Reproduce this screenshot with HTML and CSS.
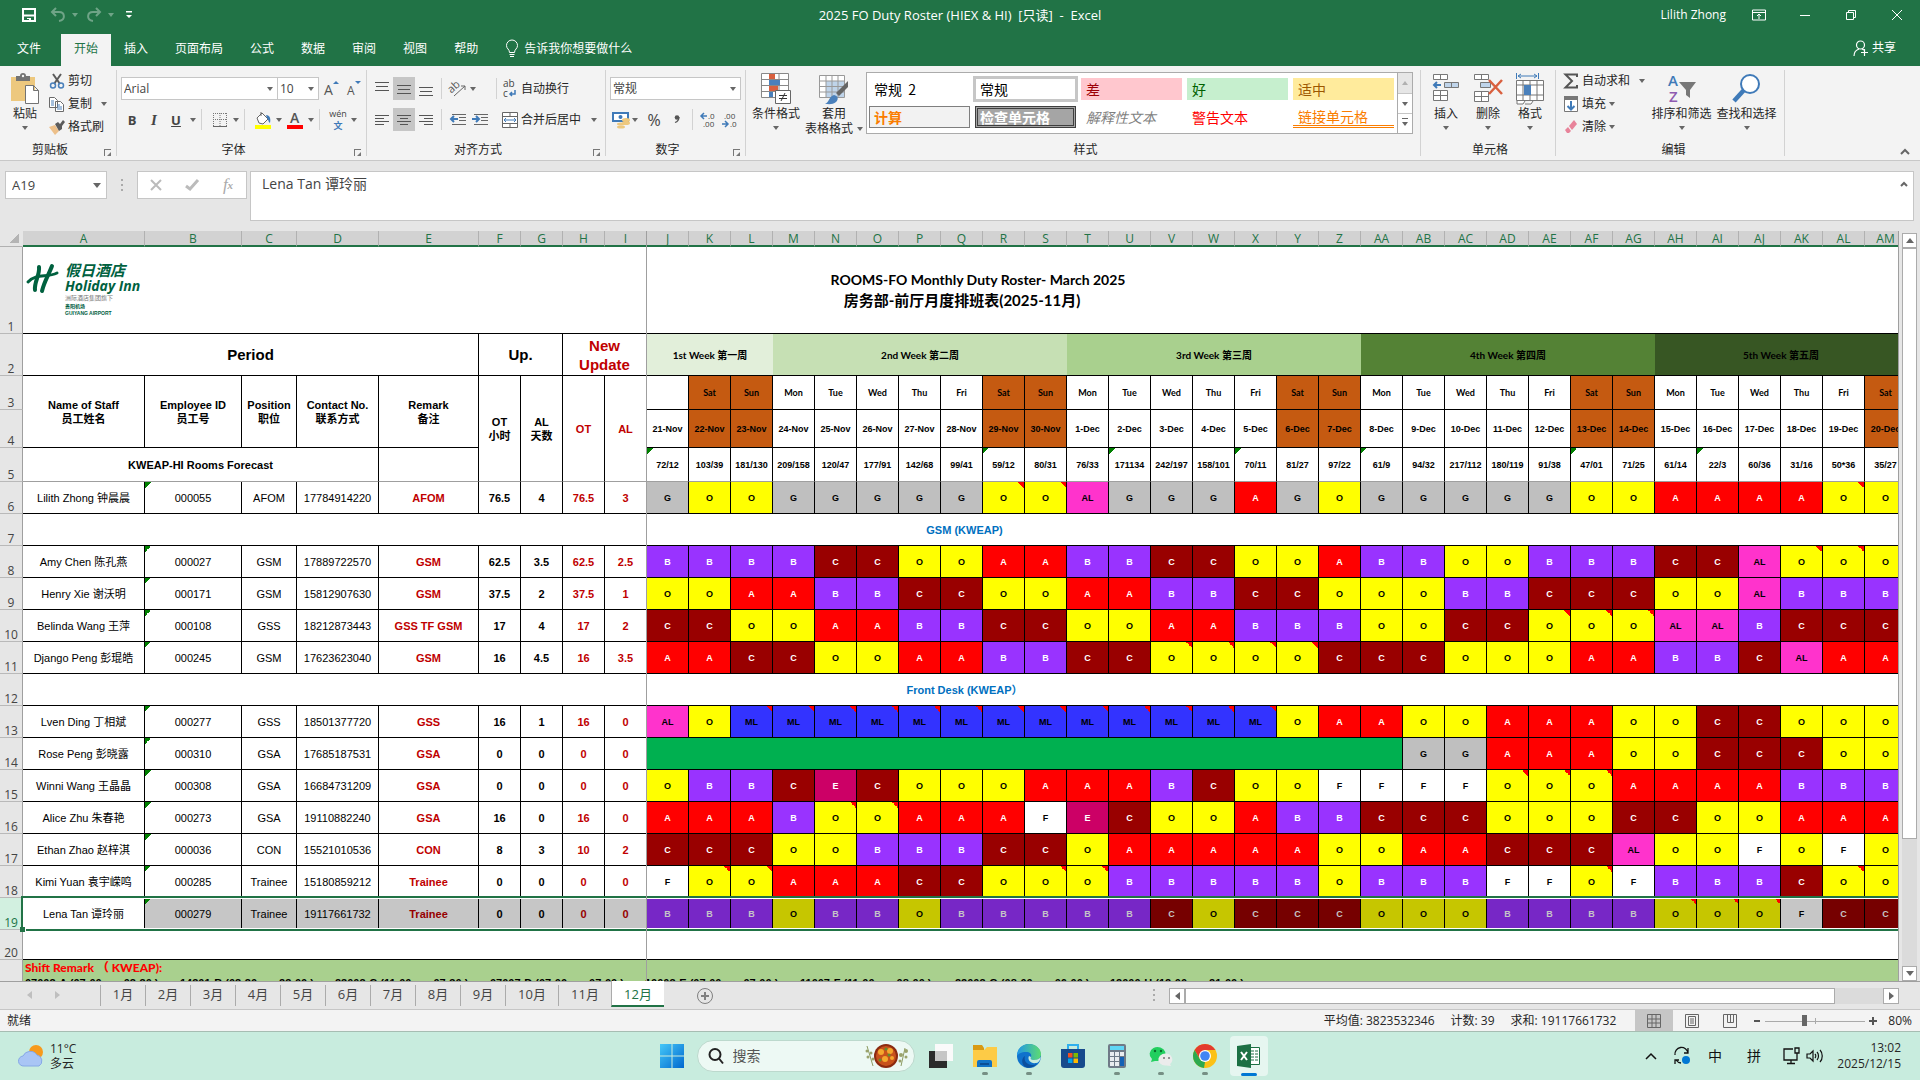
FILE: index.html
```html
<!DOCTYPE html>
<html lang="zh-CN">
<head>
<meta charset="utf-8">
<title>2025 FO Duty Roster (HIEX &amp; HI) - Excel</title>
<link rel="stylesheet" href="styles.css">
</head>
<body>
<header class="titlebar">
  <div class="quick">
    <button class="tb" aria-label="保存"><svg width="16" height="16" viewBox="0 0 16 16" fill="none" stroke="#fff" stroke-width="2"><path d="M2 2h12v12H2z"/><path d="M2 8.500h12" /><path d="M6 11h4v3H8v-2H6z" fill="#fff" stroke="none"/></svg></button>
    <button class="tb dim" aria-label="撤消"><svg width="16" height="16" viewBox="0 0 16 16" fill="none" stroke="#fff" stroke-width="2"><path d="M6 1L2 5l4 4M2 5h7c6 0 7 8 0 9"/></svg><i class="caret"></i></button>
    <button class="tb dim" aria-label="恢复"><svg width="16" height="16" viewBox="0 0 16 16" fill="none" stroke="#fff" stroke-width="2"><path d="M10 1l4 4-4 4M14 5H7C1 5 0 13 7 14"/></svg><i class="caret"></i></button>
    <button class="tb more" aria-label="自定义快速访问工具栏"><svg width="8" height="8" viewBox="0 0 8 8" fill="#fff"><path d="M1 0h6v1.500H1zM1 4h6L4 7z"/></svg></button>
  </div>
  <h1 class="doc-title">2025 FO Duty Roster (HIEX &amp; HI)&nbsp; [只读]&nbsp; -&nbsp; Excel</h1>
  <div class="window-tools">
    <span class="user">Lilith Zhong</span>
    <button aria-label="功能区显示选项"><svg width="14" height="12" viewBox="0 0 14 12" fill="none" stroke="#fff"><path d="M.5 1h13v10H.5zM.5 3.500h13M7 10V5M5 7l2-2 2 2"/></svg></button>
    <button aria-label="最小化"><svg width="12" height="12" viewBox="0 0 12 12" stroke="#fff"><path d="M1 6.500h10"/></svg></button>
    <button aria-label="还原"><svg width="12" height="12" viewBox="0 0 12 12" fill="none" stroke="#fff"><path d="M1.500 3.500h7v7h-7zM3.500 3.500v-2h7v7h-2"/></svg></button>
    <button aria-label="关闭"><svg width="12" height="12" viewBox="0 0 12 12" stroke="#fff"><path d="M1 1l10 10M11 1L1 11"/></svg></button>
  </div>
</header>
<nav class="menubar">
  <button class="menu file">文件</button><button class="menu active">开始</button><button class="menu">插入</button><button class="menu">页面布局</button><button class="menu">公式</button><button class="menu">数据</button><button class="menu">审阅</button><button class="menu">视图</button><button class="menu">帮助</button>
  <button class="menu tell"><svg width="14" height="18" viewBox="0 0 14 18" fill="none" stroke="#fff"><path d="M4.500 12.500C4.500 9 1.500 9 1.500 5.500a5 5 0 0 1 11 0C12.500 9 9.500 9 9.500 12.500zM4.500 14.500h5M5 16.500h4"/></svg>告诉我你想要做什么</button>
  <button class="menu share"><svg width="16" height="17" viewBox="0 0 16 17" fill="none" stroke="#fff" stroke-width="1.200"><circle cx="7.500" cy="5" r="4"/><path d="M1 16c0-4 2-6 5-7M9 9l2 1M11.500 9v7M8 12.500h7"/></svg>共享</button>
</nav>
<section class="ribbon" aria-label="功能区">
  <div class="group clipboard">
    <div class="tools">
      <button class="big"><svg width="30" height="32" viewBox="0 0 30 32"><path fill="#edc87e" d="M1 4h24v24H1z"/><path fill="#737373" d="M6 3h4a3 3 0 0 1 6 0h4v5H6z"/><circle cx="13" cy="3" r="1.200" fill="#f3f3f3"/><path fill="#fff" stroke="#737373" d="M15.500 12.500h8l5 5v13h-13zM23.500 12.500v5h5"/></svg><span>粘贴</span><i class="caret"></i></button>
      <div class="stack">
        <button class="line"><svg width="16" height="16" viewBox="0 0 16 16" fill="none" stroke="#5b5b5b" stroke-width="2"><path d="M4 1l7 10M12 1L5 11"/><g stroke="#4a80bb" stroke-width="1.500"><circle cx="4" cy="12.500" r="2.500"/><circle cx="12" cy="12.500" r="2.500"/></g></svg>剪切</button>
        <button class="line"><svg width="16" height="16" viewBox="0 0 16 16" fill="#fff" stroke="#6a6a6a"><path d="M.5 1.500h5l3 3v7h-8zM6.500 5.500h5l3 3v7h-8z"/><path stroke="#4a80bb" d="M2 5h3M2 7h3M2 9h3M8 9h3M8 11h5M8 13h5"/></svg>复制<i class="caret wide"></i></button>
        <button class="line"><svg width="16" height="16" viewBox="0 0 16 16"><path fill="#edc08a" d="M0 8l6-2 4 6-4 4z"/><path fill="#5b5b5b" d="M6 5l3-2 2 2 3-4 2 2-3 4v3l-3 2z"/></svg>格式刷</button>
      </div>
    </div>
    <div class="caption">剪贴板</div><button class="launch" aria-label="剪贴板设置"></button>
  </div>
  <div class="group font">
    <div class="tools rows">
      <div class="row">
        <span class="pick fontname"><select aria-label="字体"><option>Arial</option></select></span><span class="pick fontsize"><select aria-label="字号"><option>10</option></select></span>
        <button class="ic grow" aria-label="增大字号"><svg width="18" height="16" viewBox="0 0 18 16"><text x="1" y="14" font-size="14" fill="#555">A</text><path d="M10 3l3-3 3 3z" fill="#3f7ab8"/></svg></button>
        <button class="ic" aria-label="减小字号"><svg width="18" height="16" viewBox="0 0 18 16"><text x="2" y="14" font-size="12" fill="#555">A</text><path d="M10 0h6l-3 3z" fill="#3f7ab8"/></svg></button>
      </div>
      <div class="row fontrow">
        <button class="ic"><b>B</b></button><button class="ic"><em>I</em></button><button class="ic"><u>U</u></button><i class="caret first"></i><i class="bar"></i>
        <button class="ic w26" aria-label="边框"><svg width="14" height="14" viewBox="0 0 14 14" stroke="#777" fill="none"><path stroke-dasharray="1 1" d="M.5 0v13M7 0v13M13.500 0v13M0 .5h14M0 6.500h14"/><path d="M0 13.500h14" stroke="#666"/></svg></button><i class="caret"></i><i class="bar"></i>
        <button class="ic w26" aria-label="填充颜色"><svg width="18" height="18" viewBox="0 0 18 18"><path fill="#fff" stroke="#666" d="M3 7l5-5 6 6-5 5-4-1zM7 5V1"/><path fill="#3f7ab8" d="M12 4c4 0 5 4 4 8-2-1-1-3-3-5z"/><path fill="#ff0" d="M1 14h16v4H1z"/></svg></button><i class="caret"></i>
        <button class="ic w26" aria-label="字体颜色"><svg width="16" height="18" viewBox="0 0 16 18"><text x="3" y="12" font-size="14" font-weight="600" fill="#555">A</text><path fill="red" d="M0 14h16v4H0z"/></svg></button><i class="caret"></i><i class="bar"></i>
        <button class="ic w26 pinyin"><span>wén</span><span>文</span></button><i class="caret"></i>
      </div>
    </div>
    <div class="caption">字体</div><button class="launch" aria-label="字体设置"></button>
  </div>
  <div class="group align">
    <div class="tools rows">
      <div class="row">
        <button class="ic" aria-label="顶端对齐"><svg class="lines" viewBox="0 0 14 14"><path d="M0 .5h14M1 4.500h12M0 8.500h14"/></svg></button><button class="ic on" aria-label="垂直居中"><svg class="lines" viewBox="0 0 14 14"><path d="M0 3.500h14M1 7.500h12M0 11.500h14"/></svg></button><button class="ic" aria-label="底端对齐"><svg class="lines" viewBox="0 0 14 14"><path d="M0 5.500h14M1 9.500h12M0 13.500h14"/></svg></button><i class="bar"></i>
        <button class="ic" aria-label="方向"><svg width="18" height="16" viewBox="0 0 18 16"><text x="0" y="9" font-size="11" fill="#555" transform="rotate(-42 6 8)">ab</text><path d="M5 15L16 5M16 9V5h-4" fill="none" stroke="#666"/></svg></button><i class="caret"></i><i class="bar tall"></i>
        <button class="line wrap"><svg width="16" height="18" viewBox="0 0 16 18"><text x="1" y="7" font-size="10" fill="#444">ab</text><text x="1" y="17" font-size="10" fill="#444">c</text><path d="M13 10v4H8M10 12l-2 2 2 2" fill="none" stroke="#3f7ab8" stroke-width="1.500"/></svg>自动换行</button>
      </div>
      <div class="row">
        <button class="ic" aria-label="左对齐"><svg class="lines" viewBox="0 0 14 14"><path d="M0 2.500h14M0 5.500h9M0 8.500h14M0 11.500h9"/></svg></button><button class="ic on" aria-label="居中"><svg class="lines" viewBox="0 0 14 14"><path d="M0 2.500h14M3 5.500h8M0 8.500h14M3 11.500h8"/></svg></button><button class="ic" aria-label="右对齐"><svg class="lines" viewBox="0 0 14 14"><path d="M0 2.500h14M5 5.500h9M0 8.500h14M5 11.500h9"/></svg></button><i class="bar"></i>
        <button class="ic" aria-label="减少缩进"><svg width="16" height="14" viewBox="0 0 16 14" fill="none" stroke="#666"><path d="M2 1.500h14M9 4.500h7M9 7.500h7M2 11.500h14"/><path stroke="#3f7ab8" stroke-width="2" d="M8 6H1M4 3L1 6l3 3"/></svg></button><button class="ic" aria-label="增加缩进"><svg width="16" height="14" viewBox="0 0 16 14" fill="none" stroke="#666"><path d="M2 1.500h14M9 4.500h7M9 7.500h7M2 11.500h14"/><path stroke="#3f7ab8" stroke-width="2" d="M0 6h7M4 3l3 3-3 3"/></svg></button>
        <button class="line merge"><svg width="16" height="16" viewBox="0 0 16 16" fill="#fff" stroke="#666"><path d="M.5.500h15v15H.5zM.5 4.500h15M.5 11.500h15M8 1v3M8 12v3"/><path stroke="#3f7ab8" fill="none" d="M2 8h12M4 6L2 8l2 2M12 6l2 2-2 2"/></svg>合并后居中<i class="caret wide"></i></button>
      </div>
    </div>
    <div class="caption">对齐方式</div><button class="launch" aria-label="对齐设置"></button>
  </div>
  <div class="group number">
    <div class="tools rows">
      <div class="row"><span class="pick numfmt"><select aria-label="数字格式"><option>常规</option></select></span></div>
      <div class="row">
        <button class="ic" aria-label="会计数字格式"><svg width="18" height="18" viewBox="0 0 18 18"><path d="M1 2h15v8H1z" fill="#fff" stroke="#3f7ab8" stroke-width="2"/><circle cx="8.500" cy="6" r="2" fill="#3f7ab8"/><g fill="#edc87e"><ellipse cx="14" cy="9" rx="4" ry="2"/><ellipse cx="14" cy="12" rx="4" ry="2"/><ellipse cx="9" cy="13" rx="4" ry="1.500"/><ellipse cx="9" cy="16" rx="4" ry="1.500"/></g></svg></button><i class="caret"></i>
        <button class="ic pct">%</button><button class="ic comma" aria-label="千位分隔样式"><svg width="6" height="8" viewBox="0 0 6 8"><circle cx="3" cy="2.500" r="2.300" fill="#555"/><path d="M5 2c0 3-1 4.500-4 5.500" fill="none" stroke="#555" stroke-width="1.300"/></svg></button><i class="bar"></i>
        <button class="ic dec" aria-label="增加小数位数"><svg width="16" height="16" viewBox="0 0 16 16"><text x="8" y="7" font-size="8" fill="#444">.0</text><text x="3" y="15" font-size="8" fill="#444">.00</text><path d="M7 4H1M4 1L1 4l3 3" fill="none" stroke="#3f7ab8" stroke-width="1.500"/></svg></button><button class="ic dec" aria-label="减少小数位数"><svg width="16" height="16" viewBox="0 0 16 16"><text x="2" y="7" font-size="8" fill="#444">.00</text><text x="8" y="15" font-size="8" fill="#444">.0</text><path d="M0 12h6M3 9l3 3-3 3" fill="none" stroke="#3f7ab8" stroke-width="1.500"/></svg></button>
      </div>
    </div>
    <div class="caption">数字</div><button class="launch" aria-label="数字设置"></button>
  </div>
  <div class="group styles">
    <div class="tools">
      <button class="big"><svg width="30" height="32" viewBox="0 0 30 32"><path fill="#fff" stroke="#888" d="M.5.500h27v24H.5zM.5 6.500h27M.5 12.500h27M.5 18.500h27M9 0v24M18 0v24"/><path fill="#d9603f" d="M8 1h6v5H8zM8 13h9v5H8z"/><path fill="#4a80bb" d="M8 7h11v5H8zM8 19h4v5H8z"/><path fill="#fff" stroke="#666" d="M14.500 17.500h15v13h-15z"/><path stroke="#333" d="M18 22.500h8M18 25.500h8M24 20l-4 8"/></svg><span>条件格式</span><i class="caret"></i></button>
      <button class="big tablefmt"><svg width="30" height="32" viewBox="0 0 30 32"><path fill="#fff" stroke="#999" d="M.5 2.500h25v22H.5z"/><path fill="#bfd4ea" d="M7 8h18v16H7z"/><path fill="none" stroke="#999" d="M.5 8h25M.5 13.500h25M.5 19h25M7 3v21M13 3v21M19 3v21"/><path fill="#666" d="M29 8v6l-9 9-3-3z"/><path fill="#4a80bb" d="M6 31c4-1 4-8 9-9 4 1 5 4 2 7-3 3-8 2-11 2z"/></svg><span>套用</span><span>表格格式<i class="caret"></i></span></button>
      <div class="gallery">
        <div class="swatches">
          <button class="sw s-norm2">常规&nbsp; 2</button><button class="sw s-norm">常规</button><button class="sw s-bad">差</button><button class="sw s-good">好</button><button class="sw s-mid">适中</button>
          <button class="sw s-calc">计算</button><button class="sw s-check">检查单元格</button><button class="sw s-expl">解释性文本</button><button class="sw s-warn">警告文本</button><button class="sw s-link">链接单元格</button>
        </div>
        <div class="gscroll"><button class="off" aria-label="上一行"><i class="caret up"></i></button><button aria-label="下一行"><i class="caret"></i></button><button aria-label="其他"><i class="caret lined"></i></button></div>
      </div>
    </div>
    <div class="caption">样式</div>
  </div>
  <div class="group cells">
    <div class="tools">
      <button class="big"><svg width="28" height="32" viewBox="0 0 28 32" fill="#fff" stroke="#777"><path d="M1.500 1.500h14v5h-14zM8.500 2v4M1.500 17.500h14v10h-14zM1.500 22.500h14M8.500 18v9"/><path fill="#bfd4ea" d="M12.500 9.500h14v5h-14zM19.500 10v4"/><path d="M9 12H2M5 9l-3 3 3 3" fill="none" stroke="#3f7ab8" stroke-width="2"/></svg><span>插入</span><i class="caret"></i></button>
      <button class="big"><svg width="30" height="32" viewBox="0 0 30 32" fill="#fff" stroke="#777"><path d="M1.500 1.500h14v5h-14zM8.500 2v4M1.500 18.500h14v10h-14zM1.500 23.500h14M8.500 19v9"/><path fill="#bfd4ea" d="M7.500 9.500h10v5h-10z"/><path d="M16 7l13 14M29 7L16 21" stroke="#d9603f" stroke-width="2.500"/></svg><span>删除</span><i class="caret"></i></button>
      <button class="big"><svg width="30" height="32" viewBox="0 0 30 32" fill="#fff" stroke="#777"><path d="M1.500 7.500h27v20h-27zM1.500 12h27M1.500 22h27M8 7v20M15 7v20M22 7v20M2 28v3h6l2-3M10 31h6l2-3"/><path fill="#4a80bb" stroke="none" d="M9 12h7v10H9z"/><path stroke="#3f7ab8" fill="none" d="M1.500 0v6M23.500 0v6M3 3h19M6 1L3 3l3 2M19 1l3 2-3 2"/></svg><span>格式</span><i class="caret"></i></button>
    </div>
    <div class="caption">单元格</div>
  </div>
  <div class="group edit">
    <div class="tools">
      <div class="stack">
        <button class="line"><svg width="16" height="16" viewBox="0 0 16 16" fill="none" stroke="#555" stroke-width="2"><path d="M14 4V1.500H2.500L9 8l-6.500 6.500H14V12"/></svg>自动求和<i class="caret wide"></i></button>
        <button class="line"><svg width="16" height="16" viewBox="0 0 16 16"><path fill="#fff" stroke="#777" d="M1.500.500h13v15h-13z"/><path fill="#777" d="M1 0h14v4H1z"/><path d="M8 5v8M4.500 10L8 13.500 11.500 10" fill="none" stroke="#3f7ab8" stroke-width="2"/></svg>填充<i class="caret"></i></button>
        <button class="line"><svg width="16" height="16" viewBox="0 0 16 16"><path fill="#e8839a" d="M6 7l5-6 3 4-5 6z"/><path fill="#e8839a" d="M5 8l3 4-2 2H4L2 11z"/></svg>清除<i class="caret"></i></button>
      </div>
      <button class="big w64"><svg width="30" height="32" viewBox="0 0 30 32"><text x="1" y="13" font-size="15" fill="#3f7ab8" font-weight="600">A</text><text x="2" y="29" font-size="15" fill="#8e5bb0" font-weight="600">Z</text><path fill="#777" d="M12 9h17l-6 8v8l-4-3v-5z"/></svg><span>排序和筛选</span><i class="caret"></i></button>
      <button class="big w64"><svg width="30" height="32" viewBox="0 0 30 32"><path d="M2 28l10-11" stroke="#3f7ab8" stroke-width="4.500"/><circle cx="18" cy="11" r="9" fill="#fff" stroke="#3f7ab8" stroke-width="2"/></svg><span>查找和选择</span><i class="caret"></i></button>
    </div>
    <div class="caption">编辑</div>
  </div>
  <button class="collapse" aria-label="折叠功能区"><svg width="10" height="8" viewBox="0 0 10 8" fill="none" stroke="#666" stroke-width="2"><path d="M1 6l4-4 4 4"/></svg></button>
</section>
<section class="formulabar">
  <span class="pick namebox"><input aria-label="名称框" value="A19"></span>
  <i class="dots"></i>
  <div class="fx"><button aria-label="取消"><svg width="12" height="12" viewBox="0 0 12 12" stroke="#bbb" stroke-width="2"><path d="M1 1l10 10M11 1L1 11"/></svg></button><button aria-label="输入"><svg width="14" height="12" viewBox="0 0 14 12" fill="none" stroke="#bbb" stroke-width="3"><path d="M1 7l4 3 8-9"/></svg></button><button class="fn" aria-label="插入函数"><i>f</i><sub>x</sub></button></div>
  <div class="formula"><textarea aria-label="编辑栏" rows="1">Lena Tan 谭玲丽</textarea><svg width="8" height="6" viewBox="0 0 8 6" fill="none" stroke="#666" stroke-width="2"><path d="M1 5l3-3 3 3"/></svg></div>
</section>
<main class="workspace">
  <div class="sheet">
    <table id="roster"></table>
    <i class="freeze"></i>
  </div>
  <div class="vscroll"><button aria-label="向上滚动"><i class="tri up"></i></button><div class="thumb"></div><div class="track"></div><button aria-label="向下滚动"><i class="tri"></i></button></div>
</main>
<footer class="tabsbar">
  <div class="tabnav"><i class="tri left"></i><i class="tri right"></i></div>
  <div class="tabs"><button>1月</button><button>2月</button><button>3月</button><button>4月</button><button>5月</button><button>6月</button><button>7月</button><button>8月</button><button>9月</button><button class="w2">10月</button><button class="w2">11月</button><button class="w2 active">12月</button></div>
  <button class="add" aria-label="新工作表"><svg width="18" height="18" viewBox="0 0 18 18" fill="none" stroke="#808080"><circle cx="9" cy="9" r="7.500"/><path stroke-width="2" d="M5 9h8M9 5v8"/></svg></button>
  <i class="dots grip"></i>
  <div class="hscroll"><button aria-label="向左滚动"><i class="tri left"></i></button><div class="thumb"></div><div class="track"></div><button aria-label="向右滚动"><i class="tri right"></i></button></div>
</footer>
<section class="status">
  <span class="ready">就绪</span>
  <span>平均值: 3823532346</span><span>计数: 39</span><span>求和: 19117661732</span>
  <div class="views">
    <button class="on" aria-label="普通"><svg width="14" height="14" viewBox="0 0 14 14" fill="none" stroke="#666"><path d="M.5.500h13v13H.5zM0 5h14M0 9h14M5 0v14M9 0v14"/></svg></button>
    <button aria-label="页面布局"><svg width="14" height="14" viewBox="0 0 14 14" fill="none" stroke="#666"><path d="M.5.500h13v13H.5zM3.500 2.500h7v9h-7zM5 5h4M5 7h4M5 9h4"/></svg></button>
    <button aria-label="分页预览"><svg width="14" height="14" viewBox="0 0 14 14" fill="none" stroke="#666"><path d="M.5.500h13v13H.5zM4.500 1v7.500h6V1M7.500 1v7"/></svg></button>
  </div>
  <div class="zoom"><button aria-label="缩小"><svg width="6" height="6" viewBox="0 0 6 6"><path d="M0 2h6v2H0z" fill="#555"/></svg></button><input type="range" min="10" max="190" value="80" aria-label="显示比例"><button aria-label="放大"><svg width="8" height="8" viewBox="0 0 8 8"><path d="M0 3h8v2H0zM3 0h2v8H3z" fill="#555"/></svg></button><span>80%</span></div>
</section>
<section class="taskbar">
  <button class="weather"><svg width="26" height="24" viewBox="0 0 26 24"><circle cx="18" cy="8" r="7" fill="#f79a1c"/><path d="M6 22a5 5 0 0 1-1-10 8 8 0 0 1 14-1 6 6 0 0 1 2 11z" fill="#a9c5f5" stroke="#86a8e6"/></svg><span>11°C<br>多云</span></button>
  <div class="apps">
    <button class="app" aria-label="开始"><svg width="24" height="24" viewBox="0 0 24 24"><defs><linearGradient id="win" x1="0" y1="0" x2="1" y2="1"><stop offset="0" stop-color="#45c8f8"/><stop offset="1" stop-color="#0068cf"/></linearGradient></defs><path fill="url(#win)" d="M0 0h11.500v11.500H0zM12.500 0H24v11.500H12.500zM0 12.500h11.500V24H0zM12.500 12.500H24V24H12.500z"/></svg></button>
    <label class="search"><svg width="16" height="16" viewBox="0 0 16 16" fill="none" stroke="#222" stroke-width="2"><circle cx="7" cy="6.500" r="5.500"/><path d="M11 10.500l4 5"/></svg><input type="search" placeholder="搜索" aria-label="搜索"><svg width="46" height="26" viewBox="0 0 46 26"><path d="M3 3l6 20M41 5l-4 18" stroke="#8d9a62" fill="none"/><g fill="#9aa36b"><circle cx="3" cy="8" r="1.500"/><circle cx="7" cy="10" r="1.500"/><circle cx="4" cy="14" r="1.500"/><circle cx="9" cy="16" r="1.500"/><circle cx="42" cy="8" r="2"/><circle cx="37" cy="12" r="2"/><circle cx="42" cy="14" r="1.500"/><circle cx="36" cy="18" r="1.500"/></g><circle cx="22" cy="13" r="12" fill="#8b2a10"/><circle cx="22" cy="13" r="10" fill="#c8521c"/><g fill="#f5a72d"><circle cx="17" cy="9" r="3"/><circle cx="26" cy="8" r="3"/><circle cx="21" cy="16" r="3"/><circle cx="28" cy="15" r="2"/></g><g fill="#5f8f2f"><circle cx="22" cy="6" r="1.500"/><circle cx="25" cy="12" r="1.500"/><circle cx="16" cy="17" r="1.500"/></g></svg></label>
    <button class="app" aria-label="任务视图"><svg width="24" height="24" viewBox="0 0 24 24"><path fill="#2b2b2b" d="M0 7h18v17H0z"/><path fill="#fafafa" d="M6 0h18v17H6z"/><path fill="#c6c6c6" d="M6 7h12v10H6z"/></svg></button>
    <button class="app run" aria-label="文件资源管理器"><svg width="24" height="24" viewBox="0 0 24 24"><path fill="#d99a12" d="M0 1h9l2 3v4H0z"/><path fill="#fdcb46" d="M0 6h11l3-3h10v20H0z"/><path fill="#1273c6" d="M4 23v-5a2 2 0 0 1 2-2h11a2 2 0 0 1 2 2v5z"/><path fill="#0a4f96" d="M7 19h9v2H7z"/></svg></button>
    <button class="app run" aria-label="Edge"><svg width="24" height="24" viewBox="0 0 24 24"><defs><linearGradient id="edge" x1="0" y1="0" x2="1" y2="0"><stop offset="0" stop-color="#2196e8"/><stop offset="1" stop-color="#5ddc70"/></linearGradient></defs><circle cx="12" cy="12" r="12" fill="#0f72cc"/><path fill="url(#edge)" d="M0 12C0 4 6 0 12 0c7 0 12 5 12 10 0 4-3 6-7 6-3 0-4-1-3-3 1-3-1-5-5-5-5 0-8 2-9 4z"/><path fill="#c8ecdd" d="M14 13c-1 2 0 3 3 3 3 0 5-1 7-3-1 4-3 6-5 6-5 1-9-3-7-7z"/><path fill="#0b4f9e" d="M8 12c-2 6 4 11 12 8-4 4-10 5-13 2-3-4-2-8 1-10z"/></svg></button>
    <button class="app" aria-label="应用商店"><svg width="24" height="24" viewBox="0 0 24 24"><path fill="none" stroke="#2fb0ee" stroke-width="2" d="M7 6V1h10v5"/><path fill="#174a8c" d="M0 5h24v16a3 3 0 0 1-3 3H3a3 3 0 0 1-3-3z"/><path fill="#f25022" d="M7 9h4.500v4.500H7z"/><path fill="#7fba00" d="M12.500 9H17v4.500h-4.500z"/><path fill="#00a4ef" d="M7 14.500h4.500V19H7z"/><path fill="#ffb900" d="M12.500 14.500H17V19h-4.500z"/></svg></button>
    <button class="app run" aria-label="计算器"><svg width="24" height="24" viewBox="0 0 24 24"><rect x="3" width="18" height="24" rx="2" fill="#6f7a87"/><path fill="#5fd6f5" d="M5 2h14v4H5z"/><g fill="#e9ecef"><path d="M5 8h4v4H5zM10 8h4v4h-4zM15 8h4v4h-4zM5 13h4v4H5zM10 13h4v4h-4zM5 18h4v4H5zM10 18h4v4h-4z"/></g><path fill="#1461b5" d="M15 13h4v9h-4z"/></svg></button>
    <button class="app run" aria-label="微信"><svg width="24" height="24" viewBox="0 0 24 24"><path fill="#22cf5f" d="M2 18l1-3a8 7 0 1 1 6 2l-3 0z"/><circle cx="6" cy="7" r="1.200" fill="#0a6d2c"/><circle cx="12" cy="7" r="1.200" fill="#0a6d2c"/><path fill="#ececec" d="M22 22l-1-2a7 6 0 1 0-4 1.500z"/><circle cx="15" cy="14" r="1" fill="#777"/><circle cx="20" cy="14" r="1" fill="#777"/></svg></button>
    <button class="app run" aria-label="Chrome"><svg width="24" height="24" viewBox="0 0 24 24"><circle cx="12" cy="12" r="12" fill="#fbc116"/><path fill="#e33b2e" d="M1.600 6A12 12 0 0 1 22.400 6H12L7 15z"/><path fill="#2da94f" d="M1.600 6l5.200 9L12 18l-1 6A12 12 0 0 1 1.600 6z"/><circle cx="12" cy="12" r="6" fill="#fff"/><circle cx="12" cy="12" r="4.800" fill="#4285f4"/></svg></button>
    <button class="app current" aria-label="Excel"><svg width="24" height="24" viewBox="0 0 24 24"><path fill="#fff" stroke="#1d7044" d="M12 3.500h10.500v17H12z"/><path stroke="#1d7044" d="M14 7h3M18 7h3M14 10h3M18 10h3M14 13h3M18 13h3M14 16h3M18 16h3"/><path fill="#1d7044" d="M0 2l14-2v24L0 22z"/><path d="M4 8l6 8M10 8l-6 8" stroke="#fff" stroke-width="2"/></svg></button>
  </div>
  <div class="tray">
    <button aria-label="显示隐藏的图标"><svg width="12" height="8" viewBox="0 0 12 8" fill="none" stroke="#111" stroke-width="1.500"><path d="M1 7l5-5 5 5"/></svg></button>
    <button class="sync" aria-label="更新"><svg width="16" height="18" viewBox="0 0 16 18" fill="none" stroke="#111" stroke-width="1.300"><path d="M1 8a6.500 6.500 0 0 1 13-2M14 1v5h-4M7 16a7 7 0 0 1-5-3M1 17v-4h4"/><circle cx="12" cy="13" r="4" fill="#0078d4" stroke="none"/></svg></button>
    <button class="ime">中</button><button class="ime mode">拼</button>
    <button aria-label="网络"><svg width="17" height="18" viewBox="0 0 17 18" fill="none" stroke="#111" stroke-width="1.300"><path d="M10 2H1v11h13V9M4 16.500h8M8 13v3M12 1h4v5h-4zM14 6v4"/></svg></button>
    <button aria-label="音量"><svg width="18" height="14" viewBox="0 0 18 14" fill="none" stroke="#111" stroke-width="1.200"><path d="M1 5h3l3-3v10L4 9H1zM9 5c1 1 1 3 0 4M11 3c2 2 2 6 0 8M14 1c3 3 3 9 0 12"/></svg></button>
    <div class="clock">13:02<br>2025/12/15</div>
  </div>
</section>
<script src="roster.js"></script>
</body>
</html>
```
FILE: styles.css
```css
* { box-sizing: border-box; }
html, body { height: 100%; margin: 0; }
body { display: flex; flex-direction: column; overflow: hidden; background: #e6e6e6; color: #262626; font: 12px/16px "Open Sans", "Noto Sans CJK SC", sans-serif; }
button, input, select, textarea { font: inherit; color: inherit; background: none; border: 0; padding: 0; margin: 0; border-radius: 0; outline: 0; white-space: nowrap; }
button { display: flex; align-items: center; justify-content: center; }
svg { display: block; flex: none; overflow: visible; }
i { font-style: normal; }

.caret { flex: none; border: 3px solid transparent; border-top: 4px solid #666; border-bottom: 0; width: 6px; }
.caret.up { border-top: 0; border-bottom: 4px solid #b0b0b0; }
.caret.wide { margin-left: 6px; }
.caret.lined { position: relative; }
.caret.lined::before { content: ""; position: absolute; left: -3px; top: -8px; width: 6px; height: 1px; background: #666; }
.tri { flex: none; border: 4px solid transparent; border-top: 5px solid #666; border-bottom: 0; }
.tri.up { border-top: 0; border-bottom: 5px solid #666; }
.tri.left { border: 4px solid transparent; border-left: 0; border-right: 5px solid #666; }
.tri.right { border: 4px solid transparent; border-right: 0; border-left: 5px solid #666; }

/* title bar */
.titlebar { display: grid; grid-template-columns: 1fr auto 1fr; flex: none; height: 34px; background: #217346; color: #fff; padding-bottom: 4px; align-items: center; }
.quick { display: flex; gap: 8px; padding-left: 21px; }
.tb { gap: 6px; }
.tb:first-child { margin-right: 5px; }
.tb.dim { opacity: .35; }
.tb .caret { border-top-color: #fff; }
.tb.more { margin-left: 3px; }
.doc-title { margin: 0; font-size: 13px; font-weight: 400; }
.window-tools { display: flex; justify-content: flex-end; align-items: center; }
.window-tools button { width: 46px; height: 30px; }
.user { margin-right: 10px; }

/* ribbon tabs */
.menubar { display: flex; flex: none; height: 32px; background: #217346; color: #fff; }
.menu { padding: 0 14px 2px 13px; }
.menu.file { padding: 0 20px 2px 17px; }
.menu.active { background: #f3f3f3; color: #217346; padding-right: 13px; }
.menu.tell { gap: 5px; }
.menu.share { margin-left: auto; gap: 3px; padding-right: 24px; padding-bottom: 4px; }

/* ribbon */
.ribbon { display: flex; flex: none; height: 95px; background: #f3f3f3; border-bottom: 1px solid #c8c8c8; padding: 4px 0; position: relative; }
.group { position: relative; display: flex; flex-direction: column; justify-content: space-between; border-right: 1px solid #d2d2d2; flex: none; height: 86px; }
.tools { display: flex; height: 70px; }
.tools.rows { flex-direction: column; padding-top: 7px; gap: 8px; }
.row { display: flex; align-items: center; height: 23px; }
.caption { text-align: center; line-height: 12px; }
.clipboard { width: 117px; padding-left: 4px; }
.font { width: 250px; padding-left: 4px; }
.align { width: 239px; padding-left: 4px; }
.number { width: 140px; padding-left: 4px; }
.styles { width: 675px; padding-left: 5px; }
.cells { width: 135px; padding-left: 4px; }
.edit { width: 229px; padding-left: 7px; }
.clipboard .caption { padding-right: 20px; }
.font .caption, .align .caption { padding-right: 20px; }
.number .caption { padding-right: 20px; }
.big { flex-direction: column; justify-content: flex-start; width: 42px; padding-top: 3px; }
.big .caret { margin-top: 4px; }
.big svg { margin-bottom: 1px; }
.styles .big { width: 50px; }
.styles .tablefmt { width: 60px; margin: 0 2px 0 3px; line-height: 15px; }
.tablefmt span { display: flex; align-items: center; }
.tablefmt span .caret { margin: 0 0 0 4px; }
.edit .w64 { width: 65px; }
.stack { display: flex; flex-direction: column; align-items: flex-start; gap: 7px; padding-top: 3px; }
.clipboard .stack { padding-left: 3px; }
.edit .stack { width: 86px; }
.line { gap: 3px; height: 16px; }
.launch { position: absolute; right: 5px; bottom: 0; width: 7px; height: 7px; border-left: 1px solid #777; border-top: 1px solid #777; }
.launch::after { content: ""; position: absolute; right: 0; bottom: 0; border: 2px solid transparent; border-right-color: #777; border-bottom-color: #777; }
.pick { position: relative; display: block; border: 1px solid #c6c6c6; background: #fff; height: 23px; }
.pick::after { content: ""; position: absolute; right: 4px; top: 9px; border: 3px solid transparent; border-top: 4px solid #666; border-bottom: 0; pointer-events: none; }
.pick select, .pick input { width: 100%; height: 100%; padding-left: 2px; appearance: none; color: #444; }
.fontname { width: 157px; }
.fontsize { width: 41px; border-left: 0; }
.numfmt { width: 131px; }
.ic { width: 22px; height: 23px; flex: none; color: #444; }
.ic.on { background: #c6c6c6; }
.ic.grow { margin-left: 2px; }
.w26 { width: 26px; }
.caret.first { margin-left: 3px; }
.ic b, .ic em, .ic u { font-size: 13px; font-weight: 700; }
.ic em { font-family: "Liberation Serif", serif; font-size: 15px; }
.bar { width: 1px; height: 21px; background: #d2d2d2; margin: 0 5px; }
.align .bar { margin: 0 5px 0 4px; }
.align .bar.tall { margin-left: 20px; }
.align .caret { margin-left: 1px; }
.pinyin { flex-direction: column; font-size: 9px; line-height: 12px; }
.pinyin span + span { color: #3f7ab8; font-weight: 700; line-height: 11px; }
.lines { width: 14px; height: 14px; stroke: #555; fill: none; }
.line.merge { margin-left: 11px; }
.line.merge .caret { margin-left: 7px; }
.pct { font-size: 16px; margin-left: 5px; }
.comma { padding-bottom: 2px; margin-left: 1px; }
.number .bar { margin: 0 4px; }
.gallery { display: flex; width: 547px; height: 62px; margin-top: 2px; border: 1px solid #ababab; background: #fff; }
.swatches { flex: 1; display: grid; grid-template-columns: repeat(5, 101px); grid-template-rows: 22px 22px; gap: 6px 5px; padding: 5px 2px; }
.sw { justify-content: flex-start; padding: 0 5px; font: 14px/18px "Noto Sans CJK SC", sans-serif; color: #000; }
.s-norm { outline: 3px solid #c6c6c6; outline-offset: -1px; }
.s-bad { background: #ffc7ce; color: #9c0006; }
.s-good { background: #c6efce; color: #006100; }
.s-mid { background: #ffeb9c; color: #9c5700; }
.s-calc { background: #f2f2f2; border: 1px solid #7f7f7f; color: #fa7d00; font-weight: 700; padding: 0 4px; }
.s-check { background: #a5a5a5; border: 3px double #3f3f3f; color: #fff; font-weight: 700; padding: 0 2px; }
.s-expl { color: #7f7f7f; font-style: italic; }
.s-warn { color: #f00; }
.s-link { color: #fa7d00; border-bottom: 3px double #fa7d00; }
.gscroll { display: grid; grid-template-rows: 1fr 1fr 1fr; width: 15px; border-left: 1px solid #ababab; }
.gscroll button + button { border-top: 1px solid #c6c6c6; }
.gscroll .off { background: #e6e6e6; }
.collapse { margin: auto 10px 0 auto; }

/* formula bar */
.formulabar { display: flex; flex: none; align-items: flex-start; height: 70px; padding: 10px 6px 10px 5px; }
.namebox { width: 102px; height: 28px; font-size: 13px; }
.namebox input { padding-left: 6px; }
.namebox::after { top: 11px; border-width: 5px 4px 0; right: 5px; }
.dots { width: 2px; height: 12px; margin: 8px 14px; background: repeating-linear-gradient(#aaa 0 2px, transparent 2px 5px); }
.fx { display: flex; width: 110px; height: 28px; border: 1px solid #c6c6c6; background: #fff; margin-right: 3px; }
.fx button { flex: 1; color: #aaa; }
.fn { font-family: "Liberation Serif", serif; font-size: 17px; }
.fn i { font-style: italic; }
.fn sub { font-size: 11px; font-style: italic; font-weight: 700; }
.formula { flex: 1; display: flex; height: 50px; border: 1px solid #c6c6c6; background: #fff; padding: 1px 5px 0 11px; }
.formula textarea { flex: 1; resize: none; overflow: hidden; font-size: 14px; line-height: 22px; height: 24px; color: #444; }
.formula svg { margin-top: 8px; }

/* grid */
.workspace { flex: 1; min-height: 0; display: flex; border-bottom: 1px solid #9f9f9f; }
.sheet { position: relative; flex: 1; min-width: 0; overflow: hidden; border-right: 1px solid #9f9f9f; background: #fff; }
#roster { table-layout: fixed; width: 1907px; border-collapse: separate; border-spacing: 0; font-family: "Liberation Sans", "Noto Sans CJK SC", sans-serif; font-size: 11px; line-height: 14px; color: #000; text-align: center; }
#roster td, #roster th { padding: 0; overflow: hidden; white-space: nowrap; }
#roster td { border-right: 1px solid #000; border-bottom: 1px solid #000; }
.c-head { width: 23px; } .c-name { width: 122px; } .c-id { width: 97px; } .c-pos { width: 55px; } .c-tel { width: 82px; } .c-rem { width: 100px; } .c-day { width: 42px; }
#roster thead th { height: 16px; background: #d2d2d2; color: #217346; font: 12px/13px "Open Sans", sans-serif; border-right: 1px solid #b1b1b1; border-bottom: 2px solid #217346; }
#roster thead .corner { background: linear-gradient(135deg, transparent 50%, #b4b4b4 50%) 10px 2px / 9px 10px no-repeat #e6e6e6; border-right-color: #e6e6e6; border-bottom: 1px solid #b1b1b1; }
#roster .rh { background: #e6e6e6; border-right: 1px solid #9f9f9f; border-bottom: 1px solid #b9b9b9; font: 12px/12px "Open Sans", sans-serif; color: #444; vertical-align: bottom; }
.h87 { height: 87px; } .h42 { height: 42px; } .h34 { height: 34px; } .h38 { height: 38px; } .h32 { height: 32px; } .h30 { height: 30px; } .h60 { height: 60px; }
#roster .noside { border-right: 0; }
.logo { display: flex; align-items: flex-start; gap: 6px; padding: 0 0 0 4px; text-align: left; color: #00613f; height: 58px; }
.logo svg { margin-top: 3px; }
.logo div { display: flex; flex-direction: column; }
.logo .cn { font: italic 700 15px/17px "Noto Sans CJK SC", sans-serif; }
.logo .en { font: italic 700 14px/15px "Open Sans", sans-serif; }
.logo .grp { font-size: 6px; line-height: 10px; color: #777; }
.logo .port { font-size: 5px; line-height: 7px; font-weight: 700; }
.heading { font: 700 14px/20px Lato, "Noto Sans CJK SC", sans-serif; }
.heading p { margin: 0; }
.heading p:first-child { padding-left: 32px; }
.heading p:last-child { font-size: 15px; }
.period { font-size: 15px; line-height: 19px; font-weight: 700; }
#roster td.week { font: 700 10px/14px Lato, "Noto Sans CJK SC", sans-serif; border-right: 0; }
.w1 { background: #e2efda; } .wk2 { background: #c6e0b4; } .wk3 { background: #a9d08e; } .wk4 { background: #548235; } .wk5 { background: #375623; }
.bold { font-weight: 700; }
.red { color: #c00000; font-weight: 700; }
#roster .dow { font: 700 9px/12px Lato, sans-serif; }
.date, .fc, .shift { font-size: 9px; font-weight: 700; }
.weekend { background: #c55a11; }
#roster tr.frozen td, #roster td.frozen { border-bottom-color: #9f9f9f; }
.section { color: #0070c0; font-weight: 700; }
.num { background: linear-gradient(-45deg, transparent 50%, #008000 50%) left top / 6px 6px no-repeat; }
.note { background-image: linear-gradient(45deg, transparent 50%, #f00 50%); background-position: right top; background-size: 6px 6px; background-repeat: no-repeat; }
.shift { color: #000; }
.A { background-color: #f00; color: #fff; } .B { background-color: #93f; color: #fff; } .C { background-color: #900; color: #fff; } .E { background-color: #c06; color: #fff; }
.O { background-color: #ff0; } .G { background-color: #bfbfbf; } .AL { background-color: #f3c; } .ML { background-color: #33f; } .F { background-color: #fff; }
.leave { background: #00b050; }
tr.sel { position: relative; }
tr.sel td { background-color: #c6c6c6; }
tr.sel .who { background-color: #fff; }
tr.sel .red { color: #960000; }
tr.sel .B { background-color: #7727c6; color: #c6c6c6; } tr.sel .C { background-color: #760000; color: #c6c6c6; } tr.sel .O { background-color: #c6c600; }
#roster tr.sel .rh { background: #d2f0e0; color: #217346; }
tr.sel .rh::before { content: ""; position: absolute; left: 21px; right: 0; top: -2px; bottom: -1px; border: 2px solid #217346; box-shadow: inset 0 0 0 1px #fff; }
tr.sel .rh::after { content: ""; position: absolute; left: 20px; bottom: -2px; width: 5px; height: 5px; background: #217346; border: solid #fff; border-width: 0 1px 0 0; }
#roster .remark { background: #a9d08e; text-align: left; vertical-align: top; padding: 0 2px; font-weight: 700; line-height: 14px; }
.remark strong { display: block; color: #f00; font-family: Lato, "Noto Sans CJK SC", sans-serif; font-size: 12px; line-height: 16px; }
.remark div { display: grid; grid-template-columns: repeat(8, 155px); }
.freeze { position: absolute; left: 646px; top: 0; bottom: 0; width: 1px; background: #9f9f9f; }

.vscroll { width: 21px; display: flex; flex-direction: column; padding: 2px 3px 0; }
.vscroll button { flex: none; height: 15px; border: 1px solid #ababab; background: #fff; }
.vscroll .thumb { flex: 593; border: 1px solid #ababab; background: #fff; }
.vscroll .track { flex: 128; background: #dbdbdb; }

/* sheet tabs */
.tabsbar { display: flex; flex: none; height: 28px; border-bottom: 1px solid #c6c6c6; padding-right: 21px; }
.tabnav { width: 100px; display: flex; align-items: flex-start; gap: 23px; padding: 9px 0 0 27px; opacity: .3; }
.tabs { display: flex; }
.tabs button { width: 45px; height: 21px; margin-top: 3px; padding-bottom: 3px; border-left: 1px solid #ababab; font-size: 13px; color: #444; }
.tabs .w2 { width: 53px; }
.tabs .active { margin-top: -1px; height: 26px; padding: 2px 0 0; background: #fff; border-bottom: 2px solid #217346; color: #217346; position: relative; }
.add { margin-left: 32px; height: 27px; }
.grip { margin: 7px 14px 0 auto; }
.hscroll { display: flex; width: 38vw; height: 16px; margin-top: 6px; }
.hscroll button { width: 16px; border: 1px solid #ababab; background: #fff; }
.hscroll .thumb { flex: 651; border: 1px solid #ababab; background: #fff; }
.hscroll .track { flex: 48; background: #dbdbdb; }

/* status bar */
.status { display: flex; flex: none; height: 22px; align-items: center; gap: 16px; background: #f3f3f3; border-bottom: 1px solid #a6bdb2; }
.ready { margin: 0 auto 0 7px; }
.views { display: flex; height: 100%; margin-left: 3px; }
.views button { width: 38px; }
.views .on { background: #c6c6c6; }
.zoom { display: flex; align-items: center; gap: 2px; padding-right: 8px; margin-left: -14px; }
.zoom button { width: 12px; height: 16px; }
.zoom span { margin-left: 7px; }
.zoom input { appearance: none; width: 100px; height: 16px; background: linear-gradient(#aaa, #aaa) 0 8px / 100% 1px no-repeat, linear-gradient(#aaa, #aaa) 50% 5px / 1px 6px no-repeat; }
.zoom input::-webkit-slider-thumb { appearance: none; width: 5px; height: 11px; background: #666; }

/* taskbar */
.taskbar { display: grid; grid-template-columns: 1fr auto 1fr; flex: none; height: 48px; background: #c8ecde; align-items: center; }
.weather { justify-self: start; gap: 6px; padding-left: 18px; text-align: left; line-height: 15px; }
.apps { display: flex; height: 48px; align-items: center; }
.app { position: relative; width: 38px; height: 40px; margin: 0 3px; border-radius: 4px; }
.search { display: flex; align-items: center; gap: 9px; width: 218px; height: 32px; margin: 0 4px 0 3px; padding: 0 4px 0 10px; border-radius: 16px; background: #edf9f4; border: 1px solid #bcd9cd; }
.search input { flex: 1; min-width: 0; font-size: 14px; appearance: none; }
.search input::placeholder { color: #555; }
.run::after, .current::after { content: ""; position: absolute; bottom: 1px; width: 6px; height: 3px; border-radius: 2px; background: #768f84; }
.current { background: #e6f6f0; }
.current::after { width: 16px; background: #0078d4; bottom: 0; }
.tray { display: flex; justify-content: flex-end; align-items: center; padding-right: 19px; }
.tray button { width: 24px; height: 40px; }
.tray .sync { width: 38px; }
.tray .ime { width: 28px; font-size: 14px; color: #111; }
.tray .mode { width: 50px; }
.clock { width: 74px; text-align: right; line-height: 16px; white-space: nowrap; }
```
FILE: roster.js
```js
const days = 30;
const letters = ['A','B','C','D','E','F','G','H','I'];
const columnName = n => n < 26 ? String.fromCharCode(65 + n) : 'A' + String.fromCharCode(65 + n - 26);
const widths = ['c-head','c-name','c-id','c-pos','c-tel','c-rem','c-day','c-day','c-day','c-day'];

const forecast = '72/12* 103/39 181/130 209/158 120/47 177/91 142/68 99/41 59/12* 80/31 76/33 171134* 242/197 158/101 70/11* 81/27 97/22 61/9* 94/32 217/112 180/119 91/38 47/01* 71/25 61/14 22/3* 60/36 31/16 50*36 35/27'.split(' ');
const names = ['Sun','Mon','Tue','Wed','Thu','Fri','Sat'];

const staff = {
  6: ['Lilith Zhong 钟晨晨','000055','AFOM','17784914220','AFOM','76.5','4','76.5','3','G O O G G G G G O* O* AL G G G A G O G G G G G O O A A A A O* O'],
  8: ['Amy Chen 陈孔燕','000027','GSM','17889722570','GSM','62.5','3.5','62.5','2.5','B B B B C C O O A A B B C C O O A B B O O B B B C C AL O* O* O'],
  9: ['Henry Xie 谢沃明','000171','GSM','15812907630','GSM','37.5','2','37.5','1','O O A A B B C C O O A A B B C C O O O B B C C C O O AL B B B'],
  10: ['Belinda Wang 王萍','000108','GSS','18212873443','GSS TF GSM','17','4','17','2','C C O O A A B B C C O O A A B B B O O C C O* O* O* AL AL B C C C'],
  11: ['Django Peng 彭琨皓','000245','GSM','17623623040','GSM','16','4.5','16','3.5','A A C C O O A A B B C C O* O* O* O* C C C O O O A A B B C AL A A'],
  13: ['Lven Ding 丁相斌','000277','GSS','18501377720','GSS','16','1','16','0','AL O ML* ML* ML* ML* ML* ML* ML* ML* ML* ML* ML* ML* ML* O A A O O A A A O O C C O O O'],
  14: ['Rose Peng 彭晓露','000310','GSA','17685187531','GSA','0','0','0','0','leave:18 G G A A A O O C C C O O'],
  15: ['Winni Wang 王晶晶','000308','GSA','16684731209','GSA','0','0','0','0','O B B C E C O O O A A A B C O O F F F F O* O* O* A A A A B B B'],
  16: ['Alice Zhu 朱春艳','000273','GSA','19110882240','GSA','16','0','16','0','A A A B O* O* A A A F E C O O A B B C C C O O O C C O O A A A'],
  17: ['Ethan Zhao 赵梓淇','000036','CON','15521010536','CON','8','3','10','2','C C C O O B B B C C O A A A A A O O A A C C C AL O O F O F O'],
  18: ['Kimi Yuan 袁宇嵘鸣','000285','Trainee','15180859212','Trainee','0','0','0','0','F O* O* A A A C C O O* O* B B B B B O B B B F F O* F B B B C O* O'],
  19: ['Lena Tan 谭玲丽','000279','Trainee','19117661732','Trainee','0','0','0','0','B B B O B B O B B B B B C O C C C O O O B B B B O* O* O* F C C']
};

const td = (cls, text, attrs = '') => `<td class="${cls}" ${attrs}>${text}</td>`;
const row = (n, height, cells, cls = '') => `<tr class="${height} ${cls}"><th class="rh">${n}</th>${cells}</tr>`;
const isWeekend = i => i % 7 === 1 || i % 7 === 2;
const eachDay = fn => Array.from({ length: days }, (_, i) => fn(i)).join('');

function shiftCells(plan) {
  return plan.split(' ').map(code => {
    if (code.startsWith('leave')) return td('leave', '', `colspan="${code.split(':')[1]}"`);
    const name = code.replace('*', '');
    return td(`shift ${name}${code.endsWith('*') ? ' note' : ''}`, name);
  }).join('');
}

function staffRow(n) {
  const [name, id, pos, tel, remark, ot, al, newOt, newAl, plan] = staff[n];
  return row(n, 'h32',
    td('who', name) + td('num', id) + td('', pos) + td('', tel) + td('red', remark) +
    td('bold', ot) + td('bold', al) + td('red', newOt) + td('red', newAl) + shiftCells(plan),
    n === 19 ? 'sel' : '');
}

const logo = `<div class="logo"><svg width="32" height="29" viewBox="0 0 32 29" fill="none" stroke="#00613f" stroke-linecap="round"><path stroke-width="4" d="M12 3C13 11 7 18 8 26M25 2C22 10 17 18 15 27"/><path stroke-width="3" d="M1 18C9 9 20 14 30 9"/></svg><div><span class="cn">假日酒店</span><span class="en">Holiday Inn</span><span class="grp">洲际酒店集团旗下</span><span class="port">贵阳机场</span><span class="port">GUIYANG AIRPORT</span></div></div>`;

const shifts = ['07003-A (07:00——03:30 )、','14301-B (03:30——23:00 )、','23003-C (11:00——07:30 )、','07007-D (07:00——07:00 )、','10003-E (07:00——07:00 )、','11007-F (11:00——08:00 )、','22003-G (08:00——06:00 )','12000-H (12:00——21:00 )、'];

let body = '';
body += row(1, 'h87', td('noside', logo, 'colspan="9"') + td('noside heading', '<p>ROOMS-FO Monthly Duty Roster- March 2025</p><p>房务部-前厅月度排班表(2025-11月)</p>', 'colspan="15"') + td('noside', '', 'colspan="15"'));
body += row(2, 'h42', td('period', 'Period', 'colspan="5"') + td('period', 'Up.', 'colspan="2"') + td('period red', 'New<br>Update', 'colspan="2"') +
  td('week w1', '1st Week 第一周', 'colspan="3"') + td('week wk2', '2nd Week 第二周', 'colspan="7"') + td('week wk3', '3rd Week 第三周', 'colspan="7"') +
  td('week wk4', '4th Week 第四周', 'colspan="7"') + td('week wk5', '5th Week 第五周', 'colspan="6"'));
body += row(3, 'h34',
  [['Name of Staff','员工姓名'],['Employee ID','员工号'],['Position','职位'],['Contact No.','联系方式'],['Remark','备注']].map(t => td('bold', t.join('<br>'), 'rowspan="2"')).join('') +
  td('bold frozen', 'OT<br>小时', 'rowspan="3"') + td('bold frozen', 'AL<br>天数', 'rowspan="3"') + td('red frozen', 'OT', 'rowspan="3"') + td('red frozen', 'AL', 'rowspan="3"') +
  eachDay(i => td('dow' + (isWeekend(i) ? ' weekend' : ''), i ? names[(i + 5) % 7] : '')));
body += row(4, 'h38', eachDay(i => td('date' + (isWeekend(i) ? ' weekend' : ''), i < 10 ? `${21 + i}-Nov` : `${i - 9}-Dec`)));
body += row(5, 'h34', td('bold', 'KWEAP-HI Rooms Forecast', 'colspan="4"') + td('', '') +
  eachDay(i => { const flagged = forecast[i].endsWith('*'); return td('fc' + (flagged ? ' num' : ''), flagged ? forecast[i].slice(0, -1) : forecast[i]); }), 'frozen');
body += staffRow(6);
body += row(7, 'h32', td('section', 'GSM (KWEAP)', 'colspan="39"'));
for (let n = 8; n <= 11; n++) body += staffRow(n);
body += row(12, 'h32', td('section', 'Front Desk (KWEAP）', 'colspan="39"'));
for (let n = 13; n <= 19; n++) body += staffRow(n);
body += row(20, 'h30', td('', '', 'colspan="39"'));
body += row('', 'h60', td('remark', `<strong>Shift Remark （ KWEAP):</strong><div>${shifts.map(s => `<span>${s}</span>`).join('')}</div>`, 'colspan="39"'));

const cols = widths.map(w => `<col class="${w}">`).join('') + `<col class="c-day">`.repeat(days);
const head = Array.from({ length: letters.length + days }, (_, i) => `<th>${columnName(i)}</th>`).join('');
document.getElementById('roster').innerHTML = `<colgroup>${cols}</colgroup><thead><tr><th class="corner"></th>${head}</tr></thead><tbody>${body}</tbody>`;
```
